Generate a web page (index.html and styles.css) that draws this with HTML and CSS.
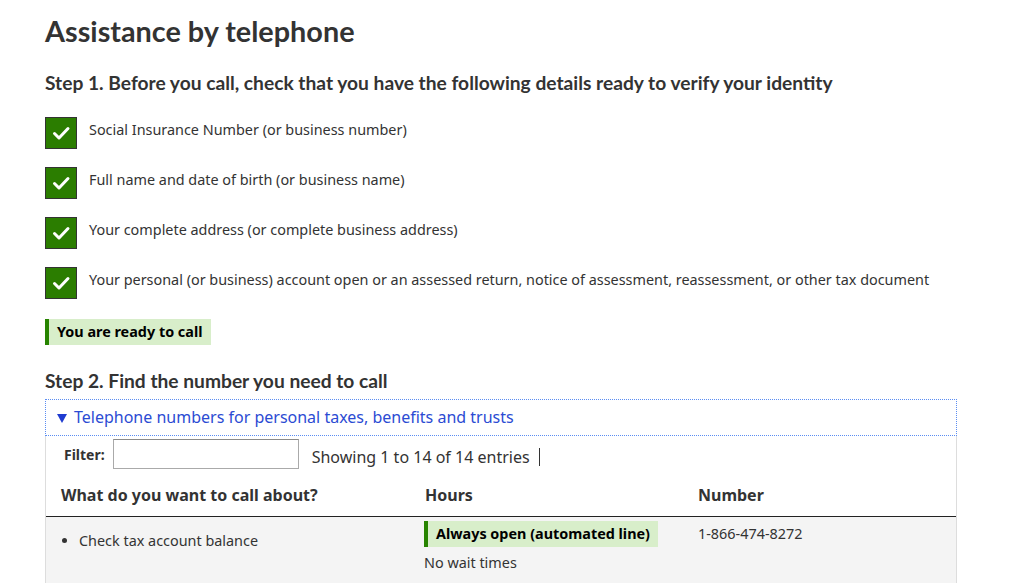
FILE: index.html
```html
<!DOCTYPE html>
<html lang="en">
<head>
<meta charset="utf-8">
<title>Assistance by telephone</title>
<link rel="stylesheet" href="styles.css">
</head>
<body>
<main class="page">
  <h1 class="title">Assistance by telephone</h1>
  <h2 class="step step1">Step 1. Before you call, check that you have the following details ready to verify your identity</h2>
  <ul class="checklist">
    <li class="check-item"><span class="box"><svg viewBox="0 0 30 30" width="30" height="30"><path d="M8.5 15.5l4.5 4.5L22 10.5" fill="none" stroke="#fff" stroke-width="3" stroke-linecap="round" stroke-linejoin="round"/></svg></span><span class="item-text">Social Insurance Number (or business number)</span></li>
    <li class="check-item"><span class="box"><svg viewBox="0 0 30 30" width="30" height="30"><path d="M8.5 15.5l4.5 4.5L22 10.5" fill="none" stroke="#fff" stroke-width="3" stroke-linecap="round" stroke-linejoin="round"/></svg></span><span class="item-text">Full name and date of birth (or business name)</span></li>
    <li class="check-item"><span class="box"><svg viewBox="0 0 30 30" width="30" height="30"><path d="M8.5 15.5l4.5 4.5L22 10.5" fill="none" stroke="#fff" stroke-width="3" stroke-linecap="round" stroke-linejoin="round"/></svg></span><span class="item-text">Your complete address (or complete business address)</span></li>
    <li class="check-item"><span class="box"><svg viewBox="0 0 30 30" width="30" height="30"><path d="M8.5 15.5l4.5 4.5L22 10.5" fill="none" stroke="#fff" stroke-width="3" stroke-linecap="round" stroke-linejoin="round"/></svg></span><span class="item-text">Your personal (or business) account open or an assessed return, notice of assessment, reassessment, or other tax document</span></li>
  </ul>
  <p class="ready"><strong>You are ready to call</strong></p>
  <h2 class="step step2">Step 2. Find the number you need to call</h2>
  <details class="panel" open>
    <summary class="panel-summary"><svg class="tri" viewBox="0 0 10 9" width="10" height="9"><path d="M0 0h10L5 9z" fill="#1f3bd0"/></svg>Telephone numbers for personal taxes, benefits and trusts</summary>
    <div class="panel-body">
      <div class="filter-row">
        <label class="filter-label" for="f">Filter:</label>
        <input class="filter-input" id="f" type="text">
        <span class="showing">Showing 1 to 14 of 14 entries</span>
        <span class="sep"></span>
      </div>
      <table class="tbl">
        <colgroup><col class="w1"><col class="w2"><col class="w3"></colgroup>
        <thead>
          <tr><th class="c1">What do you want to call about?</th><th class="c2">Hours</th><th class="c3">Number</th></tr>
        </thead>
        <tbody>
          <tr class="odd">
            <td class="c1"><ul class="bul"><li>Check tax account balance</li></ul></td>
            <td class="c2"><div class="open-label">Always open (automated line)</div><div class="wait">No wait times</div></td>
            <td class="c3">1-866-474-8272</td>
          </tr>
        </tbody>
      </table>
    </div>
  </details>
</main>
</body>
</html>
```

FILE: styles.css
```css
html, body { margin: 0; padding: 0; background: #fff; }
body { font-family: "Noto Sans", sans-serif; color: #333; font-size: 14.4px; }
.page { padding: 0 54px 0 45px; }
.title { font-family: Lato, sans-serif; font-weight: 700; font-size: 28.8px; margin: 0; padding-top: 13px; line-height: 36px; color: #333; }
.step { font-family: Lato, sans-serif; font-weight: 700; font-size: 19.2px; margin: 0; line-height: 26px; color: #333; }
.step1 { padding-top: 21px; }
.checklist { list-style: none; margin: 21px 0 0; padding: 0; }
.check-item { display: flex; align-items: flex-start; gap: 12px; height: 32px; margin-bottom: 18px; }
.box { width: 30px; height: 30px; background: #2b7d00; border: 1px solid #333; display: inline-flex; align-items: center; justify-content: center; flex: none; }
.box svg { width: 30px; height: 30px; display: block; }
.item-text { padding-top: 3px; line-height: 20px; }
.ready { display: inline-block; margin: 2px 0 0; background: #d8eeca; border-left: 4px solid #278400; padding: 4px 8px; font-size: 14.4px; line-height: 18px; color: #000; }
.step2 { padding-top: 23px; }
.panel { margin-top: 5px; }
.panel-summary { list-style: none; display: block; outline: 1px dotted #5b8df2; outline-offset: -1px; color: #2b4bd3; font-size: 16px; line-height: 22px; padding: 7px 12px 8px; cursor: pointer; }
.panel-summary::-webkit-details-marker { display: none; }
.tri { margin-right: 7px; vertical-align: 0; }
.panel-body { border-left: 1px solid #ddd; border-right: 1px solid #ddd; }
.filter-row { display: flex; align-items: center; padding: 3px 0 0 18px; }
.filter-label { font-weight: 700; font-size: 14px; margin-right: 8px; color: #333; }
.filter-input { width: 184px; height: 28px; border: 1px solid #aaa; border-top-color: #8a8a8a; padding: 0; margin: 0; box-sizing: content-box; }
.showing { font-size: 16px; margin-left: 13px; margin-top: 6px; line-height: 22px; }
.sep { width: 1px; height: 18px; background: #333; margin-left: 9px; margin-top: 6px; }
.tbl { width: 100%; border-collapse: collapse; margin-top: 6px; table-layout: fixed; }
.w1 { width: 375px; }
.w2 { width: 262px; }
.tbl th { text-align: left; font-weight: 700; font-size: 16px; padding: 9px 15px 10px; border-bottom: 1px solid #222; line-height: 22px; }
.tbl td { vertical-align: top; padding: 4px 15px; font-size: 14.4px; }
.tbl th.c2 { padding-left: 4px; }
.tbl td.c2 { padding-left: 3px; padding-bottom: 10px; }
.odd { background: #f4f4f4; }
.bul { margin: 10px 0 0; padding-left: 18px; }
.bul li { line-height: 20px; }
.open-label { display: inline-block; background: #d8eeca; border-left: 4px solid #278400; padding: 3px 8px; font-weight: 700; line-height: 20px; color: #000; }
.wait { margin-top: 6px; line-height: 20px; }
.tbl td.c3 { padding-top: 7px; line-height: 20px; }
```
